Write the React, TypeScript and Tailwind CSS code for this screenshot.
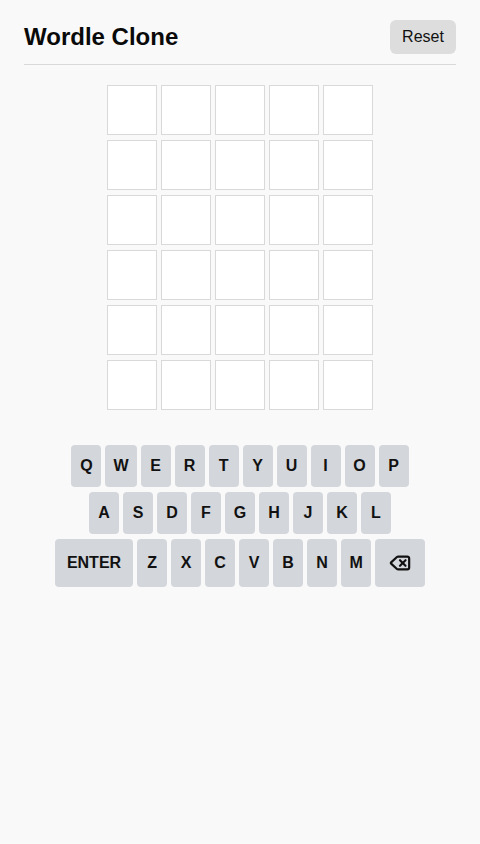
import { Delete } from "lucide-react";

const rows = ["QWERTYUIOP", "ASDFGHJKL"];
const bottom = "ZXCVBNM";
const font = "font-['Liberation_Sans',Arial,sans-serif]";

function Key({ label }: { label: string }) {
  return (
    <button className="min-w-[30px] h-[42px] px-2 rounded bg-[#d3d6da] text-base font-bold text-[#111111] flex items-center justify-center">
      {label}
    </button>
  );
}

function WideKey({ label }: { label: string }) {
  return (
    <button className="min-w-[30px] h-12 px-2 rounded bg-[#d3d6da] text-base font-bold text-[#111111] flex items-center justify-center">
      {label}
    </button>
  );
}

export default function App() {
  return (
    <div className={`${font} min-h-[844px] bg-[#f9f9f9] px-6 text-[#111111]`}>
      <header className="h-[65px] flex items-center justify-between border-b border-[#d9d9d9] pt-[9px]">
        <h1 className="text-2xl font-bold text-[#0a0a0a]">Wordle Clone</h1>
        <button className="w-[66px] h-[34px] rounded-md bg-[#dddddd] text-base text-[#111111]">Reset</button>
      </header>
      <div className="mt-5 flex flex-col items-center gap-[5px]">
        {Array.from({ length: 6 }).map((_, r) => (
          <div key={r} className="flex gap-1">
            {Array.from({ length: 5 }).map((_, c) => (
              <div key={c} className="w-[50px] h-[50px] bg-white border border-[#d9d9d9]" />
            ))}
          </div>
        ))}
      </div>
      <div className="mt-[35px] flex flex-col items-center gap-[5px]">
        {rows.map((row) => (
          <div key={row} className="flex gap-1 justify-center">
            {row.split("").map((k) => (
              <Key key={k} label={k} />
            ))}
          </div>
        ))}
        <div className="flex gap-1 justify-center">
          <button className="h-12 px-3 rounded bg-[#d3d6da] text-base font-bold text-[#111111]">ENTER</button>
          {bottom.split("").map((k) => (
            <WideKey key={k} label={k} />
          ))}
          <button className="w-[50px] h-12 rounded bg-[#d3d6da] text-[#111111] flex items-center justify-center">
            <Delete size={22} strokeWidth={2.4} />
          </button>
        </div>
      </div>
    </div>
  );
}
